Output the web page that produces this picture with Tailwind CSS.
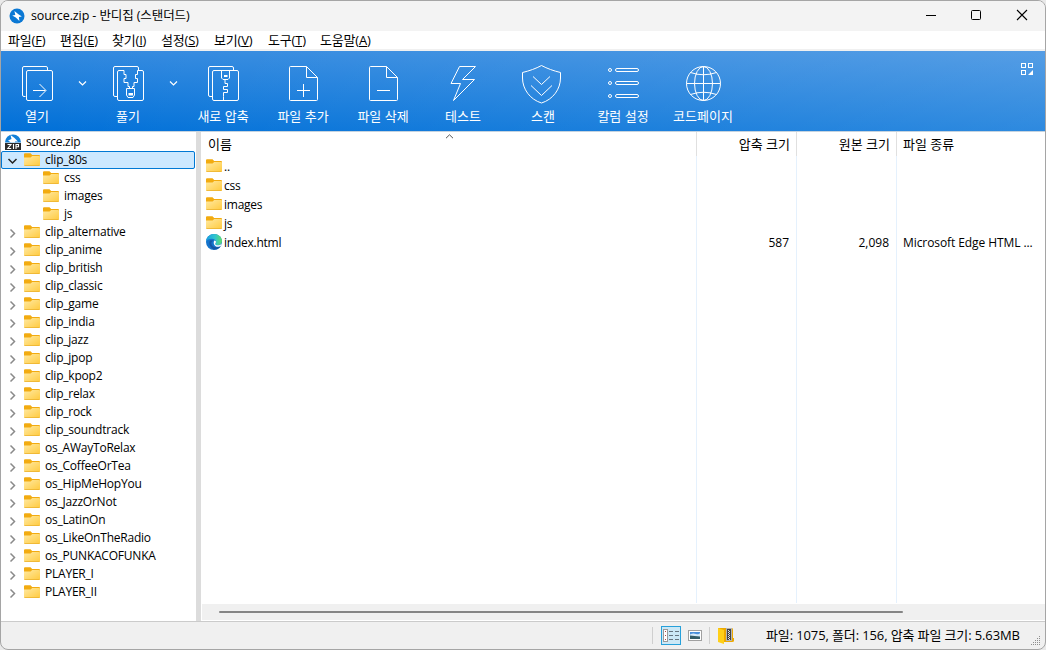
<!DOCTYPE html>
<html lang="ko">
  <head>
    <meta charset="UTF-8" />
    <meta name="viewport" content="width=device-width, initial-scale=1.0" />
    <title>source.zip - 반디집 (스탠더드)</title>
    <script src="https://cdn.jsdelivr.net/npm/@tailwindcss/browser@4"></script>
  </head>
  <body class="bg-[#e9e9e9] overflow-hidden">
    <!-- shared icons -->
    <svg class="absolute size-0">
      <defs>
        <linearGradient id="folder-fill" x1="0" y1="0" x2="1" y2="1">
          <stop offset="0" stop-color="#ffe9a2" />
          <stop offset="1" stop-color="#ffca3e" />
        </linearGradient>
        <linearGradient id="edge-top" x1="0" y1="0" x2="1" y2="0">
          <stop offset="0" stop-color="#1a9de0" />
          <stop offset="0.55" stop-color="#2fc4cf" />
          <stop offset="1" stop-color="#5fdc6c" />
        </linearGradient>
        <symbol id="folder" viewBox="0 0 16 13">
          <path d="M0 1.2Q0 .2 1 .2H6.5L8.2 2H15Q16 2 16 3V5H0Z" fill="#f2ab10" />
          <path d="M0 4.6H6.6L8.2 3.1H15.2Q16 3.1 16 4V12Q16 13 15 13H1Q0 13 0 12Z" fill="url(#folder-fill)" />
          <path d="M.4 12.6H15.6" stroke="#eab02c" stroke-width=".8" />
        </symbol>
        <symbol id="edge" viewBox="0 0 16 16">
          <circle cx="8" cy="8" r="8" fill="#1474cc" />
          <path d="M0 7.6C.3 3.2 3.8 0 8 0c4.6 0 8 3.2 8 6.900c0 2.600-2 4.200-4.400 4.200-1.600 0-2.400-.6-2.400-1.200 0-.5.8-.9.8-2C10 6 8.200 4.700 6 4.700 3 4.700.7 6 0 7.600Z" fill="url(#edge-top)" />
          <path d="M4.200 6.200C2.600 8.500 3.200 13 7.500 15.500 10.500 16 13.500 14.500 14.600 12 10 14.800 5.600 12.800 5.300 9.600c0-1.600 1-2.800 2.300-3.200Z" fill="#1455a4" />
          <path d="M8.300 6.600c1.200.2 1.700.8 1.700 1.500 0 .8-.8 1.200-.8 1.900 0 .8 1.200 1.300 2.800 1.300 1.500 0 2.900-.6 4-1.800L15.200 11.500C13.500 13 11 13 9.600 12.200 7.600 11 7.200 8.500 8.300 6.600Z" fill="#fff" />
        </symbol>
      </defs>
    </svg>

    <div
      class="w-[1046px] h-[650px] flex flex-col border border-[#a5a5a5] rounded-lg overflow-hidden bg-[#f0f0f0] text-black text-[12px] leading-none whitespace-nowrap font-['Open_Sans','Noto_Sans_CJK_KR',sans-serif]"
    >
      <!-- title bar -->
      <div class="h-[30px] shrink-0 bg-[#f3f3f3] flex items-center pl-2">
        <svg class="size-4 -mt-px" viewBox="0 0 16 16">
          <circle cx="8" cy="8" r="7.500" fill="#0b78d4" />
          <path d="M5.400 2.900 9.400 6.300 12.800 8.500 9.900 9 10.400 13 6.800 9.500 3.200 7.600 6.300 6.900Z" fill="#fff" />
        </svg>
        <h1 class="ml-1.5 text-[12.5px] tracking-[-0.1px]">source.zip - 반디집 (스탠더드)</h1>
        <svg class="ml-auto w-[120px] h-[30px]" viewBox="0 0 120 30" fill="none" stroke="#000">
          <path d="M1 14.500H11" />
          <rect x="46.500" y="9.500" width="9" height="9" rx="1" />
          <path d="M92 9 102 19M102 9 92 19" stroke-width="1.100" />
        </svg>
      </div>

      <!-- menu bar -->
      <div class="h-[18px] shrink-0 bg-white flex items-center pt-px pl-[7px] text-[13px] tracking-[-0.2px]">
        <span class="w-[52px]">파일(<u>F</u>)</span>
        <span class="w-[52px]">편집(<u>E</u>)</span>
        <span class="w-[49px]">찾기(<u>I</u>)</span>
        <span class="w-[53px]">설정(<u>S</u>)</span>
        <span class="w-[54px]">보기(<u>V</u>)</span>
        <span class="w-[52px]">도구(<u>T</u>)</span>
        <span>도움말(<u>A</u>)</span>
      </div>

      <!-- toolbar -->
      <div
        class="h-[81px] mt-0.5 shrink-0 flex items-start text-[13px] leading-[14px] text-white border-b border-[#c5d3df] bg-[linear-gradient(to_right,rgba(255,255,255,0),rgba(255,255,255,0.18)),linear-gradient(to_bottom,#3088df,#0070d8)]"
      >
        <div class="w-[72px] flex flex-col items-center pt-[13px]">
          <svg class="size-10" viewBox="0 0 40 40" fill="none" stroke="#fff">
            <path d="M8.500 32.500H7q-1.500 0-1.500-1.500V4q0-1.500 1.500-1.500H29q1.500 0 1.500 1.500V6.500" />
            <rect x="9.500" y="6.500" width="26" height="30" rx="1.500" />
            <path d="M16 26.500H28.500M22.500 20 29 26.500 22.500 33" />
          </svg>
          <span class="mt-[5px]">열기</span>
        </div>
        <svg class="w-[18px] h-2 mt-[28px]" viewBox="0 0 18 8" fill="none" stroke="#fff" stroke-width="1.200"><path d="M6 2.500 9.500 6 13 2.500" /></svg>
        <div class="w-[74px] flex flex-col items-center pt-[13px]">
          <svg class="size-10" viewBox="0 0 40 40" fill="none" stroke="#fff">
            <path d="M9 32.500H7q-1.500 0-1.500-1.500V4q0-1.500 1.500-1.500H29q1.500 0 1.500 1.500V6.500" />
            <path d="M16 6.500H11q-1.500 0-1.500 1.500V35q0 1.500 1.500 1.500H34q1.500 0 1.500-1.500V8q0-1.500-1.500-1.500H29.500V10.500H27.500V14.500H29.500V18.500H26V22.500H24.500V24.500M16 6.500V10.500H18V14.500H16V18.500H20V22.500H21.500V24.500" />
            <path d="M18.500 24.500H26.500V31L25 33.500H20L18.500 31Z" />
            <rect x="21" y="29.500" width="3.500" height="1.500" fill="#fff" />
          </svg>
          <span class="mt-[5px]">풀기</span>
        </div>
        <svg class="w-[18px] h-2 mt-[28px]" viewBox="0 0 18 8" fill="none" stroke="#fff" stroke-width="1.200"><path d="M5 2.500 8.500 6 12 2.500" /></svg>
        <div class="w-20 flex flex-col items-center pt-[13px]">
          <svg class="size-10" viewBox="0 0 40 40" fill="none" stroke="#fff">
            <path d="M9 32.500H7q-1.500 0-1.500-1.500V4q0-1.500 1.500-1.500H29q1.500 0 1.500 1.500V6.500" />
            <rect x="9.500" y="6.500" width="26" height="30" rx="1.500" />
            <path d="M18.500 6.500V14L20 15.500H25L26.500 14V6.500" />
            <rect x="21.500" y="11.500" width="2.500" height="1" fill="#fff" />
            <path d="M22 16V19.500H24.500V22.500H20.500V25.500H24.500V28.500H20.500V32.500H20.500V36" />
          </svg>
          <span class="mt-[5px]">새로 압축</span>
        </div>
        <div class="w-20 flex flex-col items-center pt-[13px]">
          <svg class="size-10" viewBox="0 0 40 40" fill="none" stroke="#fff">
            <path d="M23.500 2.500H7.500q-1 0-1 1V35.500q0 1 1 1H33.500q1 0 1-1V13.500L23.500 2.500V13.500H34.500" />
            <path d="M14 26.500H27M20.500 20V33" />
          </svg>
          <span class="mt-[5px]">파일 추가</span>
        </div>
        <div class="w-20 flex flex-col items-center pt-[13px]">
          <svg class="size-10" viewBox="0 0 40 40" fill="none" stroke="#fff">
            <path d="M23.500 2.500H7.500q-1 0-1 1V35.500q0 1 1 1H33.500q1 0 1-1V13.500L23.500 2.500V13.500H34.500" />
            <path d="M14 26.500H27" />
          </svg>
          <span class="mt-[5px]">파일 삭제</span>
        </div>
        <div class="w-20 flex flex-col items-center pt-[13px]">
          <svg class="size-10" viewBox="0 0 40 40" fill="none" stroke="#fff">
            <path d="M16.500 2.500H32.500L19.500 15.500H31.500L10.500 36.500L17.500 19.500H8Z" />
          </svg>
          <span class="mt-[5px]">테스트</span>
        </div>
        <div class="w-20 flex flex-col items-center pt-[13px]">
          <svg class="size-10 overflow-visible" viewBox="0 0 40 40" fill="none" stroke="#fff">
            <path d="M18.500 1.500C13 4.500 6 7-.500 8.500V14C-.500 25 7 35.500 18.500 39 30 35.500 37.500 25 37.500 14V8.500C31 7 24 4.500 18.500 1.500Z" />
            <path d="M10 12.500 18.500 20.500 27 12.500M8 21.500 18.500 31.500 29 21.500" />
          </svg>
          <span class="mt-[5px]">스캔</span>
        </div>
        <div class="w-20 flex flex-col items-center pt-[13px]">
          <svg class="size-10" viewBox="0 0 40 40" fill="none" stroke="#fff">
            <circle cx="7" cy="6" r="1.500" />
            <circle cx="7" cy="19" r="1.500" />
            <circle cx="7" cy="32" r="1.500" />
            <rect x="12.500" y="4.500" width="23" height="3" rx="1.500" />
            <rect x="12.500" y="17.500" width="23" height="3" rx="1.500" />
            <rect x="12.500" y="30.500" width="23" height="3" rx="1.500" />
          </svg>
          <span class="mt-[5px]">칼럼 설정</span>
        </div>
        <div class="w-20 flex flex-col items-center pt-[13px]">
          <svg class="size-10" viewBox="0 0 40 40" fill="none" stroke="#fff">
            <circle cx="20.500" cy="19.500" r="17" />
            <ellipse cx="20.500" cy="19.500" rx="9" ry="17" />
            <path d="M3.500 19.500H37.500M20.500 2.500V36.500M7.500 8.500Q20.500 13 33.500 8.500M7.500 30.500Q20.500 26 33.500 30.500" />
          </svg>
          <span class="mt-[5px]">코드페이지</span>
        </div>
        <svg class="ml-auto mr-3 mt-3 size-3" viewBox="0 0 12 12" fill="none" stroke="#fff">
          <rect x=".500" y=".500" width="4" height="4" />
          <rect x="7.500" y=".500" width="4" height="4" />
          <rect x=".500" y="7.500" width="4" height="4" />
          <path d="M12 7V12H7Z" fill="#fff" stroke="none" />
        </svg>
      </div>

      <!-- panes -->
      <div class="flex h-[489px] shrink-0 bg-white">
        <div class="w-[195px] pt-px">
          <div class="h-[18px] flex items-center pl-1">
            <svg class="size-4" viewBox="0 0 16 16">
              <path d="M0 8.500A8 8 0 0 1 16 8.500Z" fill="#1180d8" />
              <path d="M5.500 1 9.500 4 13 7.500H10V8.500H6L3 6.500 6.500 5Z" fill="#fff" />
              <rect y="9" width="16" height="7" fill="#2b2b2b" />
              <path d="M2.500 10.500H6L2.800 14.500H6.200M8.500 10V15M11 15V10.500H13.500V12.800H11" fill="none" stroke="#fff" stroke-width="1.100" />
            </svg>
            <span class="ml-[5px] tracking-[-0.25px]">source.zip</span>
          </div>
          <div id="tree"></div>
        </div>
        <div class="w-[5px] bg-[#dcdcdc]"></div>

        <div class="flex-1 flex flex-col pl-px">
          <div class="relative h-[471px] flex">
            <svg class="absolute left-[243px] top-0.5 w-[9px] h-[5px]" viewBox="0 0 9 5" fill="none" stroke="#555"><path d="M1 4.200 4.500 .8 8 4.200" /></svg>
            <!-- name column -->
            <div class="w-[495px] border-r border-[#e5f1fd]">
              <div class="h-6 flex items-center pt-px pl-1.5 border-r border-[#e0e0e0] -mr-px text-[13px]">이름</div>
              <div id="files"></div>
            </div>
            <div class="w-[100px] border-r border-[#e5f1fd] flex flex-col items-end">
              <div class="h-6 pt-px pr-1.5 flex items-center self-stretch justify-end border-r border-[#e0e0e0] -mr-px text-[13px]">압축 크기</div>
              <div class="h-[19px] mt-[77px] pr-[7px] flex items-center">587</div>
            </div>
            <div class="w-[100px] border-r border-[#e5f1fd] flex flex-col items-end">
              <div class="h-6 pt-px pr-1.5 flex items-center self-stretch justify-end border-r border-[#e0e0e0] -mr-px text-[13px]">원본 크기</div>
              <div class="h-[19px] mt-[77px] pr-[7px] flex items-center">2,098</div>
            </div>
            <div class="flex-1 pl-1.5">
              <div class="h-6 flex items-center pt-px text-[13px]">파일 종류</div>
              <div class="h-[19px] mt-[77px] flex items-center tracking-[-0.08px]">Microsoft Edge HTML ...</div>
            </div>
          </div>
          <!-- horizontal scrollbar -->
          <div class="mt-px h-4 bg-[#f0f0f0] pt-[7px] pl-[17px]">
            <div class="w-[684px] h-0.5 rounded-full bg-[#858585]"></div>
          </div>
        </div>
      </div>

      <!-- status bar -->
      <div class="flex-1 flex items-center border-t border-[#cbcbcb] pl-[651px]">
        <div class="w-px h-[17px] bg-[#cfcfcf]"></div>
        <div class="ml-2 w-5 h-[19px] border border-[#26a0da] bg-[#cbe8f6] flex items-center justify-center">
          <svg class="w-4 h-[13px]" viewBox="0 0 16 13" fill="none">
            <rect x=".500" y=".500" width="4" height="12" fill="#fff" stroke="#999" />
            <path d="M2 2.500H3M2 6.500H3M2 10.500H3" stroke="#b04a4a" />
            <path d="M6 2.500H10M12 2.500H16M6 6.500H10M12 6.500H16M6 10.500H10M12 10.500H16" stroke="#667580" />
          </svg>
        </div>
        <svg class="ml-[7px] w-[14px] h-[11px]" viewBox="0 0 14 11">
          <rect x=".500" y=".500" width="13" height="10" fill="#fff" stroke="#a0a0a0" />
          <rect x="2" y="2" width="10" height="7" fill="#4a90dc" />
          <path d="M2 4.500Q5 3 8 4T12 3V7H2Z" fill="#d5eafa" />
          <path d="M2 5.500Q6 6 12 6.500V9H2Z" fill="#335c68" />
        </svg>
        <div class="ml-[7px] w-px h-[17px] bg-[#cfcfcf]"></div>
        <svg class="ml-2 w-4 h-[17px]" viewBox="0 0 16 17">
          <path d="M0 1H14Q15 1 15 3V11H16V14Q16 15 14 15H0Z" fill="#eda900" />
          <rect x="8" y="1" width="6" height="13" fill="#b5b5b5" />
          <rect x="9" y="2" width="4" height="11" fill="#444" />
          <path d="M10.500 3V12M11.500 4V13" stroke="#ddd" stroke-dasharray="1 1" />
          <path d="M0 1 6 3V17L0 15Z" fill="#ffcf17" />
        </svg>
        <span class="ml-8 text-[13px] tracking-[-0.12px]">파일: 1075, 폴더: 156, 압축 파일 크기: 5.63MB</span>
        <svg class="ml-auto mr-1 mt-2.5 size-[10px]" viewBox="0 0 10 10" stroke="#8e8e8e" stroke-dasharray="1 1">
          <path d="M8 .500H9M6 2.500H9M4 4.500H9M2 6.500H9M0 8.500H9" />
        </svg>
      </div>
    </div>

    <script>
      const tree = [
        { name: "clip_80s", open: true },
        { name: "css", child: true },
        { name: "images", child: true },
        { name: "js", child: true },
        { name: "clip_alternative" },
        { name: "clip_anime" },
        { name: "clip_british" },
        { name: "clip_classic" },
        { name: "clip_game" },
        { name: "clip_india" },
        { name: "clip_jazz" },
        { name: "clip_jpop" },
        { name: "clip_kpop2" },
        { name: "clip_relax" },
        { name: "clip_rock" },
        { name: "clip_soundtrack" },
        { name: "os_AWayToRelax" },
        { name: "os_CoffeeOrTea" },
        { name: "os_HipMeHopYou" },
        { name: "os_JazzOrNot" },
        { name: "os_LatinOn" },
        { name: "os_LikeOnTheRadio" },
        { name: "os_PUNKACOFUNKA" },
        { name: "PLAYER_I" },
        { name: "PLAYER_II" },
      ];

      const arrow = (open) =>
        open
          ? `<svg class="w-[22px] h-3 mt-0.5" viewBox="0 0 22 12" fill="none" stroke="#222" stroke-width="1.500"><path d="M7.500 4 11.500 8 15.500 4" /></svg>`
          : `<svg class="w-[22px] h-3 mt-0.5" viewBox="0 0 22 12" fill="none" stroke="#8a8a8a" stroke-width="1.500"><path d="M9.500 2.500 13.500 6.500 9.500 10.500" /></svg>`;

      document.getElementById("tree").innerHTML = tree
        .map(
          (item) => `
          <div class="h-[18px] flex items-center ${
            item.open
              ? "w-[194px] rounded-xs bg-[#cce8ff] outline outline-[#0078d4] -outline-offset-1"
              : ""
          }">
            ${item.child ? `<div class="w-[41px]"></div>` : arrow(item.open)}
            <svg class="-mt-px ml-px w-4 h-[13px]"><use href="#folder" /></svg>
            <span class="ml-[5px] tracking-[-0.22px]">${item.name}</span>
          </div>`
        )
        .join("");

      document.getElementById("files").innerHTML = ["..", "css", "images", "js", "index.html"]
        .map(
          (name) => `
          <div class="h-[19px] flex items-center pl-1 ${name === ".." ? "mt-px" : ""}">
            ${
              name === "index.html"
                ? `<svg class="-mt-px size-4"><use href="#edge" /></svg>`
                : `<svg class="-mt-0.5 w-4 h-[13px]"><use href="#folder" /></svg>`
            }
            <span class="ml-0.5 tracking-[-0.25px]">${name}</span>
          </div>`
        )
        .join("");
    </script>
  </body>
</html>
